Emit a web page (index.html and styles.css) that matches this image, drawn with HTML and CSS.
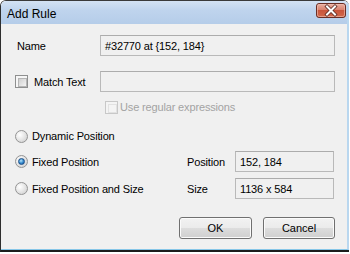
FILE: index.html
```html
<!DOCTYPE html>
<html>
<head>
<meta charset="utf-8">
<link rel="stylesheet" href="styles.css">
</head>
<body>
<div class="frame">
  <div class="window">
    <div class="titlebar">
      <span class="title">Add Rule</span>
      <span class="close">
        <svg width="30" height="15" viewBox="0 0 30 15">
          <defs>
            <linearGradient id="cg" x1="0" y1="0" x2="0" y2="1">
              <stop offset="0" stop-color="#eab3a5"/>
              <stop offset="0.45" stop-color="#d9826e"/>
              <stop offset="0.5" stop-color="#c9553b"/>
              <stop offset="1" stop-color="#d26a4c"/>
            </linearGradient>
          </defs>
          <rect x="0.5" y="0.5" width="29" height="14" rx="2.5" fill="url(#cg)" stroke="#6b2e24"/>
          <rect x="1.5" y="1.5" width="27" height="12" rx="1.8" fill="none" stroke="#f2c3b6" stroke-opacity="0.6"/>
          <path d="M11 3.5 L19 11.5 M19 3.5 L11 11.5" stroke="#5a2a22" stroke-width="3.6" stroke-linecap="square"/>
          <path d="M11 3.5 L19 11.5 M19 3.5 L11 11.5" stroke="#ffffff" stroke-width="2" stroke-linecap="square"/>
        </svg>
      </span>
    </div>
    <div class="client">
      <div class="row row-name">
        <span class="label-col"><span class="indent">Name</span></span>
        <div class="field wide">#32770 at {152, 184}</div>
      </div>
      <div class="row row-match">
        <span class="label-col"><span class="check"></span><span class="check-text">Match Text</span></span>
        <div class="field wide"></div>
      </div>
      <div class="row row-regex">
        <span class="check disabled"></span><span class="disabled-text">Use regular expressions</span>
      </div>
      <div class="row row-dyn">
        <span class="radio"></span><span class="radio-text">Dynamic Position</span>
      </div>
      <div class="grid-row row-fixed">
        <span class="radio-cell"><span class="radio selected"></span><span class="radio-text">Fixed Position</span></span>
        <span class="side-label">Position</span>
        <div class="field">152, 184</div>
      </div>
      <div class="grid-row row-size">
        <span class="radio-cell"><span class="radio"></span><span class="radio-text">Fixed Position and Size</span></span>
        <span class="side-label">Size</span>
        <div class="field">1136 x 584</div>
      </div>
      <div class="buttons">
        <button class="btn">OK</button>
        <button class="btn">Cancel</button>
      </div>
    </div>
  </div>
</div>
</body>
</html>
```
FILE: styles.css
```css
html, body {
  margin: 0;
  padding: 0;
  background: #ffffff;
}
body {
  width: 350px;
  height: 254px;
  overflow: hidden;
  font-family: "Liberation Sans", Arial, sans-serif;
  font-size: 11px;
  letter-spacing: -0.15px;
  color: #000;
}
.frame {
  width: 349px;
  height: 252px;
  box-sizing: border-box;
  border-left: 1px solid #2e2e2e;
  border-top: 1px solid #3a3a3a;
  border-bottom: 2px solid #1c1c1c;
  border-top-left-radius: 6px;
  border-top-right-radius: 6px;
  overflow: hidden;
}
.window {
  height: 100%;
  box-sizing: border-box;
  border-right: 2px solid #b9d7ef;
  border-bottom: 1px solid #86c6e8;
  display: flex;
  flex-direction: column;
  background: #f0f0f0;
}
.titlebar {
  height: 23px;
  flex: none;
  display: flex;
  align-items: center;
  justify-content: space-between;
  background: linear-gradient(#d3e2f3 0%, #bfd4ed 40%, #b5cde9 100%);
  padding: 0 1px 0 6px;
}
.title {
  font-size: 12px;
  letter-spacing: 0;
  color: #000;
  margin-top: 2px;
}
.close {
  display: flex;
  margin-top: -4px;
}
.client {
  flex: 1;
  padding: 11px 12px 0 14px;
  display: flex;
  flex-direction: column;
}
.row {
  display: flex;
  align-items: center;
}
.label-col {
  width: 85px;
  flex: none;
  display: flex;
  align-items: center;
}
.indent {
  padding-left: 2px;
}
.field {
  height: 21px;
  box-sizing: border-box;
  border: 1px solid #b9b9b9;
  border-top-color: #acacac;
  background: #f0f0f0;
  padding-left: 4px;
  display: flex;
  align-items: center;
}
.wide {
  flex: 1;
}
.row-name { height: 21px; }
.row-match { height: 21px; margin-top: 15px; }
.row-regex { height: 14px; margin-top: 8px; padding-left: 90px; }
.row-dyn { height: 20px; margin-top: 12px; }

.check {
  width: 13px;
  height: 13px;
  box-sizing: border-box;
  border: 1px solid #8e8f8f;
  background: #f6f6f6;
  flex: none;
  position: relative;
}
.check::after {
  content: "";
  position: absolute;
  left: 2px;
  top: 2px;
  width: 7px;
  height: 7px;
  border: 1px solid #b5b5b5;
  background: linear-gradient(135deg, #cfcfcf, #f4f4f4);
}
.check.disabled {
  border-color: #c8c8c8;
  background: #f4f4f4;
}
.check.disabled::after {
  border-color: #e2e2e2;
  background: #f4f4f4;
}
.check-text {
  margin-left: 6px;
}
.disabled-text {
  margin-left: 2px;
  color: #a3a3a3;
}
.radio {
  width: 13px;
  height: 13px;
  box-sizing: border-box;
  border-radius: 50%;
  border: 1px solid #949494;
  background: radial-gradient(circle at 35% 35%, #ffffff 0%, #e8e8e8 45%, #c9c9c9 100%);
  flex: none;
  position: relative;
}
.radio.selected::after {
  content: "";
  position: absolute;
  left: 2px;
  top: 2px;
  width: 7px;
  height: 7px;
  box-sizing: border-box;
  border-radius: 50%;
  border: 1px solid #1c4f88;
  background: radial-gradient(circle at 40% 35%, #b9e6fb 0%, #3a8fd0 50%, #134f96 100%);
}
.radio-text {
  margin-left: 4px;
}
.grid-row {
  display: grid;
  grid-template-columns: 172px 48px 99px;
  align-items: center;
  height: 21px;
}
.row-fixed { margin-top: 5px; }
.row-size { margin-top: 6px; }
.radio-cell {
  display: flex;
  align-items: center;
}
.side-label {
  display: block;
}
.buttons {
  display: flex;
  justify-content: flex-end;
  gap: 11px;
  margin-top: 18px;
}
.btn {
  font-family: "Liberation Sans", Arial, sans-serif;
  font-size: 11px;
  color: #000;
  height: 22px;
  width: 73px;
  padding: 0;
  border: 1px solid #707070;
  border-radius: 3px;
  background: linear-gradient(#f2f2f2 0%, #ebebeb 50%, #dddddd 51%, #cfcfcf 100%);
  box-shadow: inset 0 0 0 1px #fbfbfb;
}
.btn + .btn {
  width: 72px;
}
```
